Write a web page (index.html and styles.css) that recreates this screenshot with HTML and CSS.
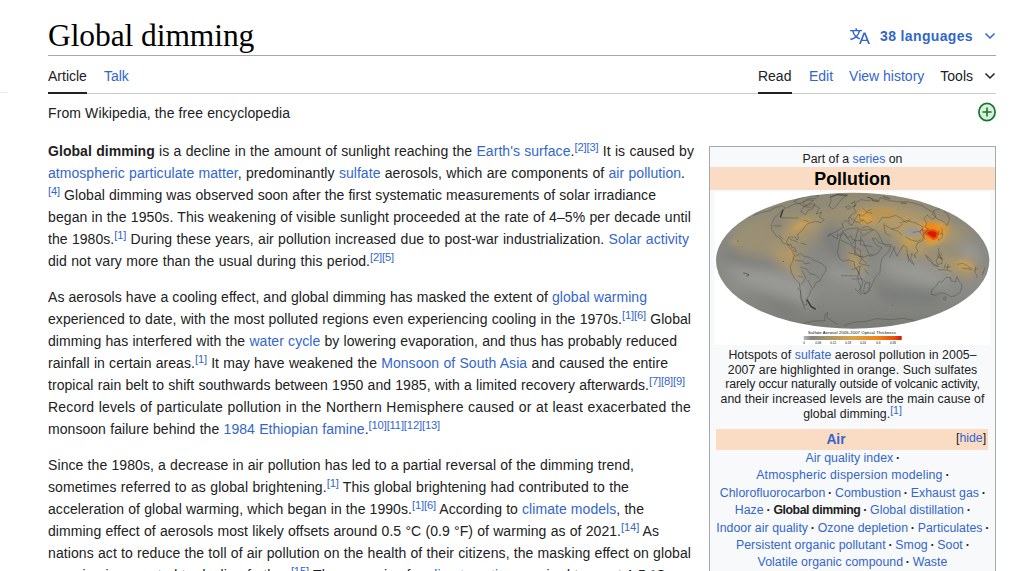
FILE: index.html
```html
<!DOCTYPE html>
<html lang="en">
<head>
<meta charset="utf-8">
<title>Global dimming</title>
<link rel="stylesheet" href="styles.css">
</head>
<body>
<div class="edge"></div>
<main class="page">
<header class="title-row">
<h1>Global dimming</h1>
<a class="languages"><svg width="20" height="20" viewBox="0 0 20 20"><path fill="currentColor" d="M20 18h-1.44a.6.6 0 0 1-.4-.12.8.8 0 0 1-.23-.31L17 15h-5l-1 2.54a.8.8 0 0 1-.22.3.6.6 0 0 1-.4.14H9l4.55-11.47h1.89zm-3.53-4.31L14.89 9.5a12 12 0 0 1-.39-1.24q-.09.37-.19.69l-.19.56-1.58 4.19zm-6.3-1.58a13.4 13.4 0 0 1-2.91-1.41 11.46 11.46 0 0 0 2.81-5.37H12V4H7.31a4 4 0 0 0-.2-.56C6.87 2.79 6.6 2 6.6 2l-1.47.5s.4.89.6 1.5H0v1.33h2.15A11.23 11.23 0 0 0 5 10.7a17.2 17.2 0 0 1-5 2.1q.56.82.87 1.38a23.3 23.3 0 0 0 5.22-2.51 15.6 15.6 0 0 0 3.56 1.77zM3.63 5.33h4.91a8.1 8.1 0 0 1-2.45 4.45 9.1 9.1 0 0 1-2.46-4.45"/></svg><span>38 languages</span><svg class="chev" width="12" height="12" viewBox="0 0 12 12"><path d="M1.5 3.5 6 8l4.500-4.500"/></svg></a>
</header>
<nav class="tabs">
<div class="group"><a class="tab active">Article</a><a class="tab">Talk</a></div>
<div class="group right"><a class="tab active">Read</a><a class="tab">Edit</a><a class="tab">View history</a><a class="tab tools">Tools<svg class="chev" width="12" height="12" viewBox="0 0 12 12"><path d="M1.500 3.500 6 8l4.500-4.500"/></svg></a></div>
</nav>
<div class="subtitle"><span>From Wikipedia, the free encyclopedia</span>
<svg width="20" height="20" viewBox="0 0 20 20"><ellipse cx="10" cy="10" rx="8.100" ry="8.700" fill="#dcefd8" stroke="#117733" stroke-width="1.700"/><path d="M5.500 10h9M10 5.500v9" stroke="#117733" stroke-width="1.600"/></svg></div>
<div class="content">
<article>
<p class="intro">
<span><b>Global dimming</b> is a decline in the amount of sunlight reaching the <a>Earth's surface</a>.<sup>[2][3]</sup> It is caused by</span>
<span><a>atmospheric particulate matter</a>, predominantly <a>sulfate</a> aerosols, which are components of <a>air pollution</a>.</span>
<span><sup>[4]</sup> Global dimming was observed soon after the first systematic measurements of solar irradiance</span>
<span>began in the 1950s. This weakening of visible sunlight proceeded at the rate of 4–5% per decade until</span>
<span>the 1980s.<sup>[1]</sup> During these years, air pollution increased due to post-war industrialization. <a>Solar activity</a></span>
<span>did not vary more than the usual during this period.<sup>[2][5]</sup></span></p>
<p class="effects">
<span>As aerosols have a cooling effect, and global dimming has masked the extent of <a>global warming</a></span>
<span>experienced to date, with the most polluted regions even experiencing cooling in the 1970s.<sup>[1][6]</sup> Global</span>
<span>dimming has interfered with the <a>water cycle</a> by lowering evaporation, and thus has probably reduced</span>
<span>rainfall in certain areas.<sup>[1]</sup> It may have weakened the <a>Monsoon of South Asia</a> and caused the entire</span>
<span>tropical rain belt to shift southwards between 1950 and 1985, with a limited recovery afterwards.<sup>[7][8][9]</sup></span>
<span>Record levels of particulate pollution in the Northern Hemisphere caused or at least exacerbated the</span>
<span>monsoon failure behind the <a>1984 Ethiopian famine</a>.<sup>[10][11][12][13]</sup></span></p>
<p class="reversal">
<span>Since the 1980s, a decrease in air pollution has led to a partial reversal of the dimming trend,</span>
<span>sometimes referred to as global brightening.<sup>[1]</sup> This global brightening had contributed to the</span>
<span>acceleration of global warming, which began in the 1990s.<sup>[1][6]</sup> According to <a>climate models</a>, the</span>
<span>dimming effect of aerosols most likely offsets around 0.5 °C (0.9 °F) of warming as of 2021.<sup>[14]</sup> As</span>
<span>nations act to reduce the toll of air pollution on the health of their citizens, the masking effect on global</span>
<span>warming is expected to decline further.<sup>[15]</sup> The scenarios for <a>climate action</a> required to meet 1.5 °C</span></p>
</article>
<aside>
<div class="series">Part of a <a>series</a> on</div>
<div class="topic">Pollution</div>
<svg class="map" width="275" height="153" viewBox="15 6 825 459">
<defs>
<clipPath id="globe"><ellipse cx="428" cy="212" rx="410" ry="204"/></clipPath>
<filter id="soft" x="-50%" y="-50%" width="200%" height="200%"><feGaussianBlur stdDeviation="16"/></filter>
<filter id="haze" x="-50%" y="-50%" width="200%" height="200%"><feGaussianBlur stdDeviation="7"/></filter>
<linearGradient id="base" x1="0" y1="0" x2="0" y2="1"><stop offset="0" stop-color="#8f8975"/><stop offset=".45" stop-color="#888883"/><stop offset=".7" stop-color="#8b8c87"/><stop offset="1" stop-color="#7b7c76"/></linearGradient>
<linearGradient id="scale"><stop offset="0" stop-color="#b8b8b4"/><stop offset=".08" stop-color="#858580"/><stop offset=".25" stop-color="#a59568"/><stop offset=".5" stop-color="#d9a345"/><stop offset=".75" stop-color="#ee8418"/><stop offset=".93" stop-color="#e84b08"/><stop offset="1" stop-color="#d61400"/></linearGradient>
</defs>
<rect x="15" y="6" width="825" height="459" fill="#fff"/>
<g clip-path="url(#globe)">
<rect x="15" y="6" width="825" height="412" fill="url(#base)"/>
<g filter="url(#soft)">
<path fill="#a3946f" d="M70 115 190 70 350 60 430 30 600 35 730 100 790 140 700 200 620 150 490 135 360 85 280 190 260 250 190 205 80 190Z" opacity=".65"/>
<path fill="#b39a66" d="M250 95 330 75 310 115 230 150 205 130ZM180 170 230 175 275 245 250 250 200 210ZM400 175 450 195 470 240 450 250ZM455 55 540 50 650 80 715 100 740 140 660 165 640 205 580 190 540 120 450 100ZM640 200 790 205 810 255 760 260Z"/>
<path fill="#999a95" d="M45 235 180 240 275 270 310 350 230 320 90 275ZM355 225 470 260 460 280 360 260ZM520 205 630 220 730 265 680 295 590 270 520 240ZM740 165 800 165 820 205 760 200Z"/>
<path fill="#7c7e7a" d="M40 175 180 215 260 255 160 235 50 210ZM330 130 380 110 400 200 355 190ZM480 270 560 290 700 300 690 350 520 340ZM100 300 270 350 250 390ZM190 85 225 85 215 130 195 130Z"/>
</g>
<g filter="url(#haze)">
<ellipse cx="273" cy="105" rx="28" ry="7" fill="#d0a253" transform="rotate(-30 273 105)"/>
<ellipse cx="75" cy="157" rx="16" ry="3" fill="#c9a455"/>
<path fill="#c79d54" d="M232 180 248 185 256 210 244 208ZM252 235 276 262 270 271ZM415 190 437 210 446 228 435 225Z"/>
<path fill="#d2a44d" d="M740 213 781 223 792 236 750 227Z"/>
<ellipse cx="468" cy="80" rx="29" ry="20" fill="#d49d42"/><ellipse cx="515" cy="70" rx="45" ry="14" fill="#bb9455"/>
<path fill="#cb9e4d" d="M575 145 596 147 612 140 606 168 590 163Z"/>
<path fill="#d8a345" d="M628 103 698 97 704 145 665 168 645 155Z"/>
<ellipse cx="664" cy="125" rx="29" ry="28" fill="#ee8a16"/><ellipse cx="697" cy="117" rx="20" ry="8" fill="#e89525"/>
<ellipse cx="609" cy="125" rx="28" ry="12" fill="#96979c"/>
</g>
<path fill="#d91a00" stroke="#f05808" stroke-width="6" d="m645 129 14-8 13-1 12 8-3 13-10 6-12-7Z"/>
<g class="coast">
<path d="m130 76 25-9 22-4 15-9 24-7 10 7-15 12-18 18-9 19 2 18 13 17 12 8 9 14 15 5 7 12 17 10-4-13-10-2-2-9-7 2-7-9 7-14 20-1 4 9 5-3-2-14 11-9 9-11 11-13 23-6 16 4 10-9-15-8 7-15-16 6 9-18-14-8-8 12-12 2-7 14-15-9 11-17 14-7 14-10-17-1-20 9-23 4-22 11"/>
<path d="m251 34 20-10 33-6 24-2-11 9-25 2-14 9 9 13 17-8 12 2-12 9-21-2-13-8ZM361 21l20-7 31 2-16 10-12 16-14 15-14-8 7-15ZM406 51l12-4 5 6-10 4Z"/>
<path d="m211 83 54 1m-75 23 24 1m-8 27 14 12m60-57 15 5M246 185l9 14 16-8 12 8 15 3 18 11 18 7 13 11 1 12-10 13-8 17-13 5-5 14-9 8-5 15-9 13 1 16-8 1-7-20-4-24-3-22-15-14-9-18-3-18 7-15 4-17"/>
<path d="m248 204 10 8 20 1 7 9 16-4m-31 14 19 4 11 15 17 4 12 12m-54-26 12 22-13 22m-12-28 17 5m-17 32 10 8-1 20 15 38m7-90 15 25M239 148l14 4 10 5m8 2 18 5"/>
<path d="m389 149 8-24 17-8 29-3 12 6 21-1 18 1 11 11 12 26 11 11 14 1-5 14-20 21-5 17-2 27-14 14-10 22-9 20-11 7-13-2-1-19-9-20 3-24-12-16-2-15-17-5-15 4-13-10-5-19Z"/>
<path d="m399 125 28 38 11-20 5-25m-52 32 33 15 15 25m5-72 16 19 30-18m-37 17-2 28 36 6m-58-1 22 12 2 20m-37-12 24 3 16 10 33-10m-39 29 30 7m-33-30 23 23m-20 8-3 25m-22 13 29-1 17 12m-31-43 19 44-12 24m17-65 12 16m-42 42 20 19m-29-76 30-12m-18-78-3 45 20 6m5-3-12 25m-54 35 50 1m22 22 15-2-4 22-11 12-4-9Z"/>
<path d="m401 112-5-11 9-10 13 4-2-13 11-9 12-6-7-11 4-17 16-10 24 3 12-4 20 4 2-9 30 9 23 3 29 0 40 10 20 12 22 12 3 13-11 6-15-13-9 11 8 13-5 11 10 7-8 7-12-5-4 9 9 12-2 12-15 7-6 12 7 13-10 8 3 11-12-13-3 15 10 19-9-7-10-19-3-24-9-9-12 18-8 16-10-25-11-11-14 1-20-7-8-11-12-1 13 20 16 8-13 18-21 8-12-24-12-25-13 2-17-3-5-12-9 7-9-11-9-3-4 8-9-6 1 14-10-4-12-11-10 9Z"/>
<path d="m413 98 13 8 7-13 15 5 11-9 13 12 15-8m-67-11 14 9 10-18 13 5 14-11 16 3m-39 2 2 17 12 4m-4-39 11 11 15-7m21 41 11-16 23-1 18-6 17 9 14 13 13-10m-78 17 21 11 19-2 16-13m-58-2 5 31 16 8m1-20 20 5 13 12m-7-36 21-7 25 6 25 13-10 13-22 3m-21 14 16 9 20 4 10-5m7-13 10-16 20 7m-33-12 7 33m-89 22-7 13-10 20M455 114l16-5 16 8"/>
<path d="m671 62 23-8 18 19 7 15-8 18-13-13-13-5-17-14ZM693 113l5 6-6 14 7-4-3 13-11 9m2-31-1 15m-3 11 5 6m0 22-4 7 13 15m-11-10-3 13 11 9-6-15 9 14M646 195l15 12 11 17 13 5-13-3-17-17Zm39 5 12 6-1 15-14 2-4-12Zm23 20-6 13m13-11-4 17m-8-7 13-1m-32 8 29 1 11 5m-12-13 10-2m20-7 16-3 15 8 13 10-9-1-20-3m36 7 12-7"/>
<path d="m666 299-3 14 15 3 13-8 16 3 15 9 13-2 17-12 4-21-8-9-7-16-5 16-14-4 1-9-15-1-11 13-12 1-6 11Zm37 22 6 1-3 9-6-4ZM797 230l-2 18 8 10-5 6m19-9 8-22m7 62-9 7m-50 33 14-9 9-5m-15 8-19 5M280 401l31-8 33-1 1-18 8-6-2 15 12 8 20 12M402 407l28-10 38-3 32-8 39 3 40-4 33 6 2 8-34 6M594 192l1 23"/>
<path class="dark" d="m219 59-8 23m80 247 12 20 14 9"/>
<path class="mark" d="m82 153 4 2m133 59 3 1m324 131 2 1m-448-99 17 6m-8 5 8-4M423 41l13-7m-9 17 12-7M486 31l20 4m66 4 18 1M471 21l17 5m30-7 23 8M325 350l2 2M752 340l22-10M361 21l20-7 31 2"/>
</g>
</g>
<text x="294" y="431" textLength="264">Sulfate Aerosol 2005-2007 Optical Thickness</text>
<rect x="281" y="438" width="294" height="12" fill="url(#scale)"/>
<g class="ticks"><text x="280" y="462">0</text><text x="316" y="462">0.06</text><text x="361" y="462">0.12</text><text x="406" y="462">0.18</text><text x="450" y="462">0.24</text><text x="499" y="462">0.3</text><text x="540" y="462">0.36</text></g>
</svg>
<div class="caption">Hotspots of <a>sulfate</a> aerosol pollution in 2005–<br>2007 are highlighted in orange. Such sulfates<br><span class="tight">rarely occur naturally outside of volcanic activity,</span><br>and their increased levels are the main cause of<br><span class="last">global dimming.<sup>[1]</sup></span></div>
<div class="section"><a class="name">Air</a><span class="hide">[<a>hide</a>]</span></div>
<div class="links"><a>Air quality index</a> <b>·</b><br><a class="wide">Atmospheric dispersion modeling</a> <b>·</b><br><a>Chlorofluorocarbon</a> <b>·</b> <a>Combustion</a> <b>·</b> <a>Exhaust gas</a> <b>·</b><br><a>Haze</a> <b>·</b> <b class="current">Global dimming</b> <b>·</b> <a>Global distillation</a> <b>·</b><br><a>Indoor air quality</a> <b>·</b> <a>Ozone depletion</a> <b>·</b> <a>Particulates</a> <b>·</b><br><a>Persistent organic pollutant</a> <b>·</b> <a>Smog</a> <b>·</b> <a>Soot</a> <b>·</b><br><a>Volatile organic compound</a> <b>·</b> <a>Waste</a></div>
</aside>
</div>
</main>
</body>
</html>
```

FILE: styles.css
```css
* { box-sizing: border-box; }
html, body { height: 571px; overflow: hidden; }
body { margin: 0; display: flex; background: #fff; color: #202122; font: 14px/22px "Liberation Sans", Arial, sans-serif; }
a, sup { color: #3366cc; }
.edge { width: 8px; height: 93px; border-bottom: 1px solid #eaecf0; }
.page { width: 948px; height: 571px; overflow: hidden; margin-left: 40px; }
.title-row { height: 56px; padding-top: 16px; border-bottom: 1px solid #a2a9b1; display: flex; justify-content: space-between; }
h1 { margin: 0; font: 400 31.5px/40px "Liberation Serif", Georgia, serif; color: #000; letter-spacing: -.08px; white-space: nowrap; }
.languages { display: flex; align-items: center; height: 40px; font-weight: 700; letter-spacing: .35px; }
.languages span { margin: 0 11px 0 10px; }
.chev path { fill: none; stroke: currentColor; stroke-width: 1.5; }
.tabs { height: 38px; border-bottom: 1px solid #c8ccd1; display: flex; justify-content: space-between; }
.group { display: flex; gap: 16px; height: 38px; }
.group:first-child { gap: 17px; }
.tab { padding-top: 9px; height: 38px; white-space: nowrap; }
.tab.active { color: #202122; border-bottom: 2px solid #202122; }
.right .active { width: 34px; margin-right: 1px; }
.tools { color: #202122; display: flex; gap: 11px; }
.tools svg { margin-top: 5px; }
.subtitle { height: 40px; padding-top: 8px; display: flex; justify-content: space-between; letter-spacing: .11px; }
.subtitle svg { margin-right: -1px; }
.content { display: flex; justify-content: space-between; }
article { width: 655px; padding-top: 6px; white-space: nowrap; letter-spacing: .05px; }
p { margin: 0 0 14px; }
/* Each row is set to its own measure */
p > span { display: block; text-align: justify; text-align-last: justify; }
.intro span:nth-child(1) { width: 646px; }
.intro span:nth-child(2) { width: 637px; }
.intro span:nth-child(3) { width: 608px; }
.intro span:nth-child(4) { width: 643px; letter-spacing: .09px; }
.intro span:nth-child(5) { width: 641px; }
.intro span:nth-child(6) { width: 346px; }
.effects span:nth-child(1) { width: 599px; }
.effects span:nth-child(2) { width: 643px; }
.effects span:nth-child(3) { width: 629px; }
.effects span:nth-child(4) { width: 620px; }
.effects span:nth-child(5) { width: 637px; }
.effects span:nth-child(6) { width: 643px; letter-spacing: .18px; }
.effects span:nth-child(7) { width: 392px; }
.reversal span:nth-child(1) { width: 586px; letter-spacing: .09px; }
.reversal span:nth-child(2) { width: 581px; letter-spacing: .09px; }
.reversal span:nth-child(3) { width: 596px; }
.reversal span:nth-child(4) { width: 611px; }
.reversal span:nth-child(5) { width: 643px; letter-spacing: .09px; }
.reversal span:nth-child(6) { width: 618px; }
sup { font-size: 11.2px; line-height: 1; letter-spacing: -.15px; vertical-align: baseline; position: relative; top: -5px; }
aside { width: 287px; height: 500px; margin-top: 12px; border: 1px solid #a2a9b1; background: #f8f9fa; font-size: 12.3px; text-align: center; white-space: nowrap; flex: none; }
.series { height: 20px; line-height: 24px; }
.topic { height: 23px; line-height: 24px; background: #fadcc4; color: #000; font-size: 17.8px; font-weight: 700; letter-spacing: .05px; }
.map { display: block; margin: 2px 0 0 5px; font-family: "Liberation Sans", sans-serif; font-size: 12.5px; }
.coast path { fill: none; stroke: #43433b; stroke-width: 1.6; stroke-opacity: .75; stroke-linejoin: round; }
.coast .dark { stroke: #191917; stroke-width: 4; }
.coast .mark { stroke: #2c2c28; stroke-width: 2.2; }
.ticks text { font-size: 9px; }
.caption { padding-top: 3px; line-height: 14.6px; height: 81px; letter-spacing: .06px; }
.tight { letter-spacing: -.15px; }
.last { position: relative; top: 1px; }
.caption sup { font-size: 10.5px; letter-spacing: 0; top: -4px; }
.section { height: 21px; margin: 3px 7px 0 6px; background: #fadcc4; display: grid; grid-template-columns: 1fr 30px; line-height: 21px; padding-right: 2px; }
.name { font-size: 13.8px; font-weight: 700; }
.hide { text-align: right; line-height: 19px; }
.links { line-height: 17.4px; letter-spacing: .05px; }
.links b { margin: 0 -.7px; letter-spacing: 0; }
.links .wide { letter-spacing: .17px; }
.links .current { color: #202122; letter-spacing: -.42px; margin: 0; }
```
